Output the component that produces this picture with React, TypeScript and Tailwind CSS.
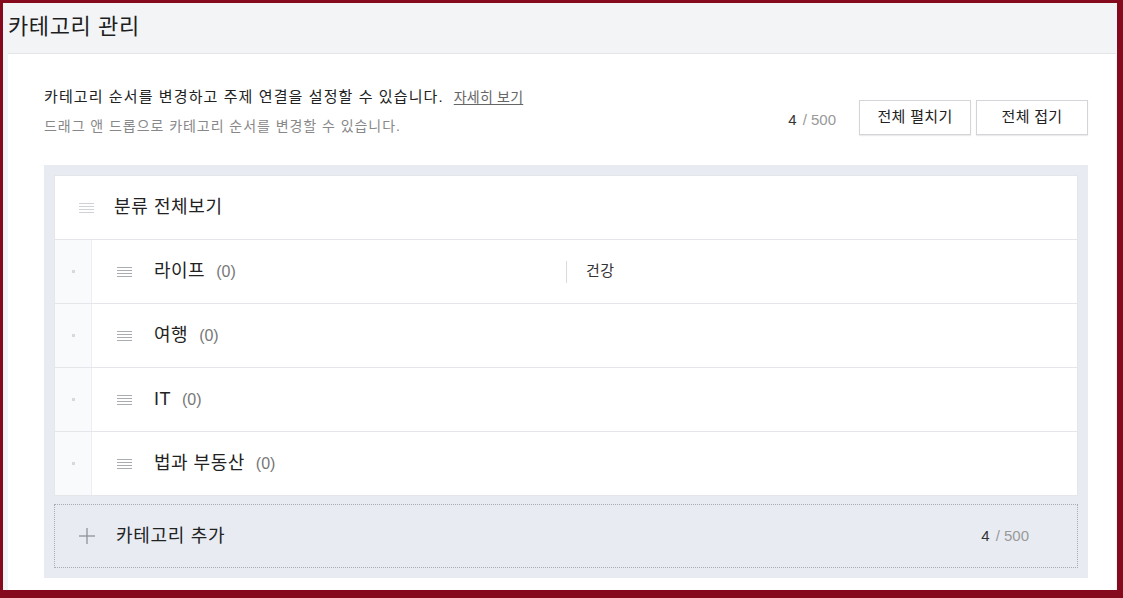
import React from "react";

const FONT = '"Liberation Sans", "Noto Sans CJK KR", sans-serif';

function DragIcon({ light = false }: { light?: boolean }) {
  return (
    <svg width="15" height="11" viewBox="0 0 15 11" className="shrink-0">
      <g stroke={light ? "#cfd2d6" : "#a9acb0"} strokeWidth="1">
        <line x1="0" y1="1.5" x2="15" y2="1.5" />
        <line x1="0" y1="4.5" x2="15" y2="4.5" />
        <line x1="0" y1="7.5" x2="15" y2="7.5" />
        <line x1="0" y1="10.5" x2="15" y2="10.5" />
      </g>
    </svg>
  );
}

function ChildRow({ name, topic }: { name: string; topic?: string }) {
  return (
    <div className="flex h-[64px] border-b border-[#e4e6ea]">
      <div className="flex w-1/2 items-stretch">
        <div className="flex w-[37px] shrink-0 items-center justify-center border-r border-[#eceef1] bg-[#f9fafb]">
          <div className="h-[3px] w-[3px] bg-[#d6d9dd]" />
        </div>
        <div className="flex items-center pl-[25px]">
          <DragIcon />
          <span className="ml-[22px] text-[18px] tracking-[0.5px] text-[#222]">{name}</span>
          <span className="ml-[11px] text-[16px] text-[#777]">(0)</span>
        </div>
      </div>
      <div className="flex w-1/2 items-center">
        {topic && (
          <>
            <div className="h-[22px] w-px bg-[#d8dade]" />
            <span className="ml-[19px] text-[15px] tracking-[0.5px] text-[#333]">{topic}</span>
          </>
        )}
      </div>
    </div>
  );
}

export default function App() {
  return (
    <div
      className="flex h-[598px] w-[1123px] flex-col overflow-hidden border-b-[8px] border-l-[3px] border-r-[6px] border-t-[3px] border-[#860a1e] bg-[#f3f4f6]"
      style={{ fontFamily: FONT }}
    >
      <div className="flex h-[50px] shrink-0 items-center pl-[5px] pb-[4px]">
        <h1 className="text-[22px] font-normal tracking-[0.6px] text-[#1e1e1e]">카테고리 관리</h1>
      </div>
      <div className="ml-[5px] mr-[1px] flex-1 border-t border-[#e3e5e8] bg-white pl-[36px] pr-[28px]">
        <div className="flex items-start justify-between pt-[33px]">
          <div>
            <div className="flex items-center leading-[20px]">
              <span className="text-[15px] tracking-[1.1px] text-[#222]">
                카테고리 순서를 변경하고 주제 연결을 설정할 수 있습니다.
              </span>
              <span className="ml-[10px] text-[14px] tracking-[0.2px] text-[#666] underline underline-offset-2">
                자세히 보기
              </span>
            </div>
            <div className="mt-[10px] text-[14px] leading-[18px] tracking-[0.95px] text-[#888]">
              드래그 앤 드롭으로 카테고리 순서를 변경할 수 있습니다.
            </div>
          </div>
          <div className="mt-[13px] flex items-center">
            <span className="mt-[6px] text-[15px] text-[#333]">4</span>
            <span className="ml-[6px] mt-[6px] text-[15px] text-[#999]">/ 500</span>
            <button className="ml-[23px] h-[35px] w-[112px] border border-[#d3d5d8] bg-white text-[15px] tracking-[0.3px] text-[#222] shadow-[0_1px_1px_rgba(0,0,0,0.08)]">
              전체 펼치기
            </button>
            <button className="ml-[5px] h-[35px] w-[112px] border border-[#d3d5d8] bg-white text-[15px] tracking-[0.3px] text-[#222] shadow-[0_1px_1px_rgba(0,0,0,0.08)]">
              전체 접기
            </button>
          </div>
        </div>

        <div className="mt-[30px] bg-[#e8ecf2] px-[10px] pb-[10px] pt-[10px]">
          <div className="border border-b-0 border-[#e4e6ea] bg-white">
            <div className="flex h-[64px] items-center border-b border-[#e4e6ea] pl-[24px]">
              <DragIcon light />
              <span className="ml-[20px] text-[18px] tracking-[0.6px] text-[#222]">분류 전체보기</span>
            </div>
            <ChildRow name="라이프" topic="건강" />
            <ChildRow name="여행" />
            <ChildRow name="IT" />
            <ChildRow name="법과 부동산" />
          </div>
          <div className="mt-[8px] flex h-[64px] items-center justify-between border border-dotted border-[#a9acb0] pl-[24px] pr-[48px]">
            <div className="flex items-center">
              <svg width="16" height="16" viewBox="0 0 16 16">
                <g stroke="#8f9296" strokeWidth="1.3">
                  <line x1="8" y1="0" x2="8" y2="16" />
                  <line x1="0" y1="8" x2="16" y2="8" />
                </g>
              </svg>
              <span className="ml-[21px] text-[18px] tracking-[0.7px] text-[#222]">카테고리 추가</span>
            </div>
            <div className="flex items-center">
              <span className="text-[15px] text-[#333]">4</span>
              <span className="ml-[6px] text-[15px] text-[#999]">/ 500</span>
            </div>
          </div>
        </div>
      </div>
    </div>
  );
}
